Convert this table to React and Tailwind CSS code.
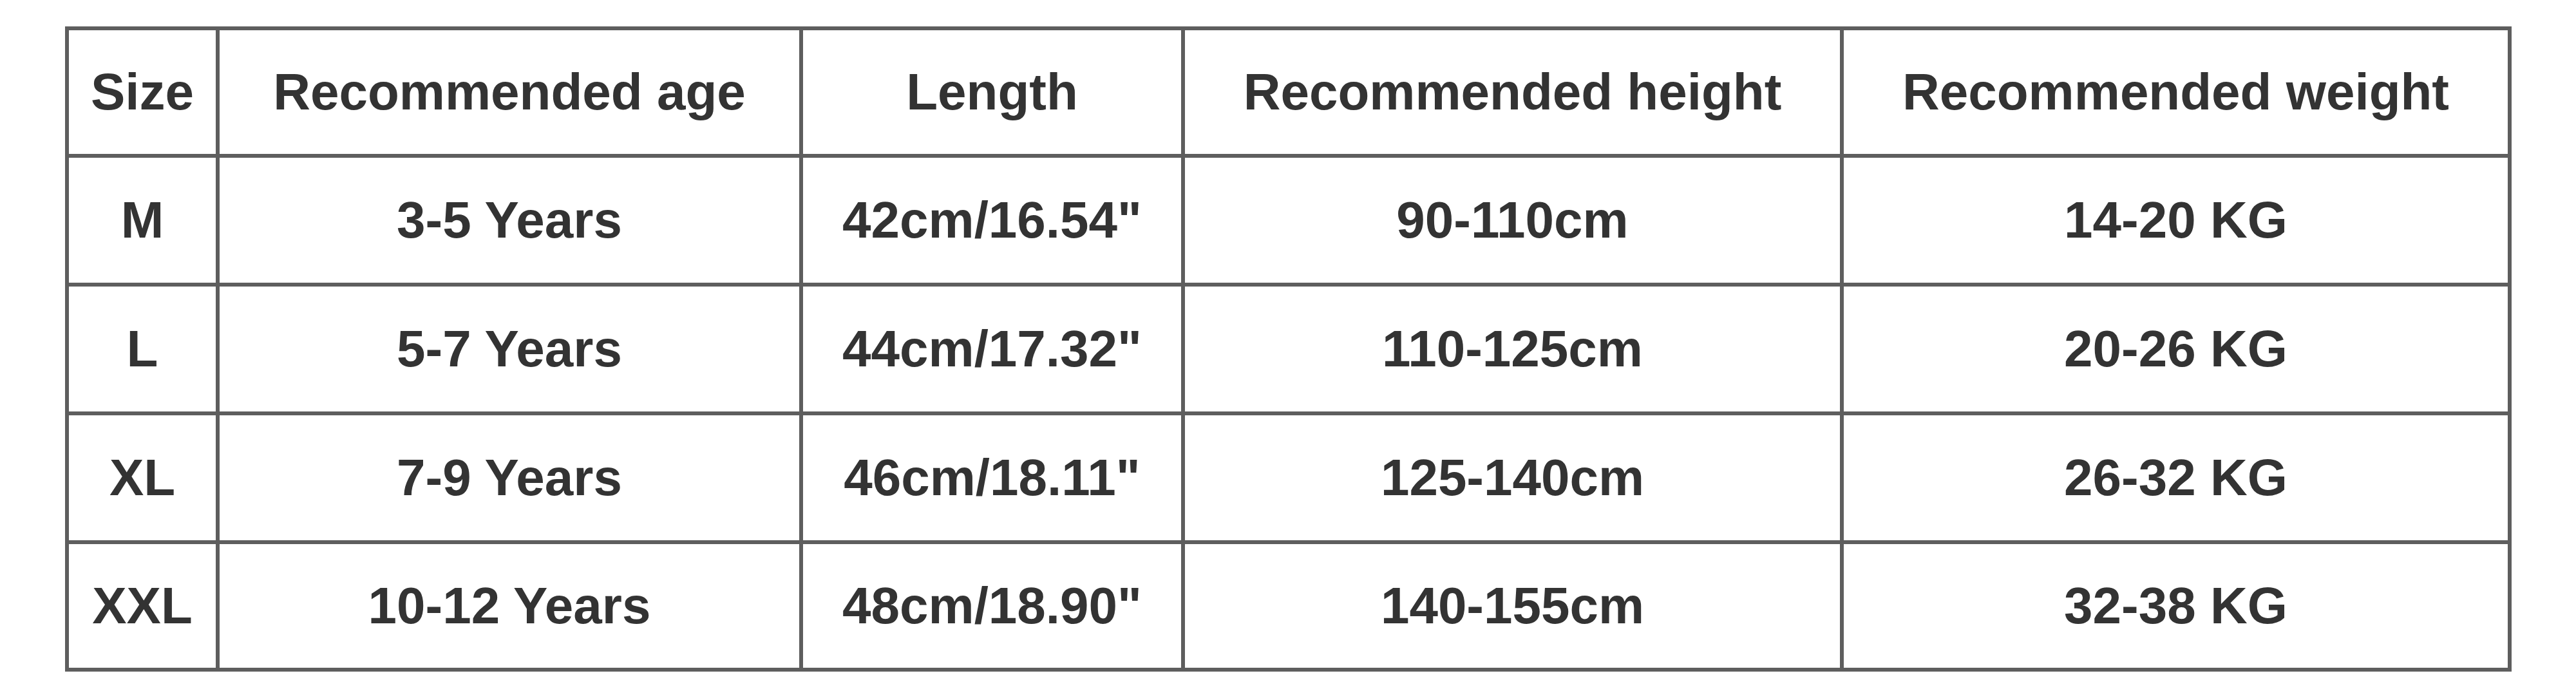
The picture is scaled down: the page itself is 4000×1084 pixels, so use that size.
const headers = ["Size", "Recommended age", "Length", "Recommended height", "Recommended weight"];

const rows = [
  ["M", "3-5 Years", "42cm/16.54\"", "90-110cm", "14-20 KG"],
  ["L", "5-7 Years", "44cm/17.32\"", "110-125cm", "20-26 KG"],
  ["XL", "7-9 Years", "46cm/18.11\"", "125-140cm", "26-32 KG"],
  ["XXL", "10-12 Years", "48cm/18.90\"", "140-155cm", "32-38 KG"],
];

export default function App() {
  return (
    <div className="min-h-screen w-[4000px] bg-white pt-[41px] pl-[101px]" style={{ fontFamily: '"Liberation Sans", Arial, sans-serif' }}>
      {/* size chart grid */}
      <div className="inline-grid grid-cols-[228px_900px_587px_1017px_1031px] grid-rows-[192px_194px_194px_194px_192px] gap-[6px] p-[6px] bg-[#5e5e5e]">
        {headers.map((h) => (
          <div key={h} className="bg-white flex items-center justify-center text-[80px] font-bold text-[#333333]">
            {h}
          </div>
        ))}
        {rows.map((row, i) =>
          row.map((cell, j) => (
            <div key={i + "-" + j} className="bg-white flex items-center justify-center text-[80px] font-bold text-[#333333]">
              {cell}
            </div>
          ))
        )}
      </div>
    </div>
  );
}
